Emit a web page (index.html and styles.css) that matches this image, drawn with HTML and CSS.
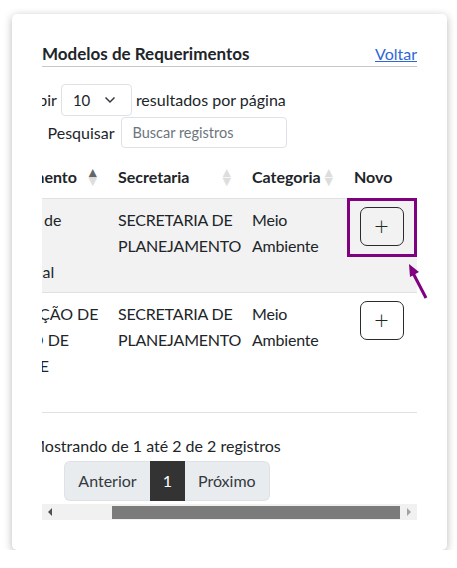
FILE: index.html
```html
<!DOCTYPE html>
<html lang="pt-BR">
<head>
<meta charset="utf-8">
<title>Modelos de Requerimentos</title>
<link rel="stylesheet" href="styles.css">
</head>
<body>
<div class="card">
  <div class="card-head">
    <h2 class="card-title">Modelos de Requerimentos</h2>
    <a class="back-link" href="#">Voltar</a>
  </div>
  <div class="scroller" id="scroller">
    <div class="dt-length">
      <span>Exibir</span>
      <span class="select">10
        <svg class="chevron" width="12" height="8" viewBox="0 0 12 8"><path d="M1.5 1.5l4.5 4.5 4.5-4.5" fill="none" stroke="#343a40" stroke-width="1.5"/></svg>
      </span>
      <span>resultados por página</span>
    </div>
    <div class="dt-filter">
      <span>Pesquisar</span>
      <input class="search" type="text" placeholder="Buscar registros">
    </div>
    <table class="dt-table">
      <colgroup>
        <col class="c1"><col class="c2"><col class="c3"><col class="c4">
      </colgroup>
      <thead>
        <tr>
          <th class="sortable asc">Requerimento</th>
          <th class="sortable">Secretaria</th>
          <th class="sortable">Categoria</th>
          <th>Novo</th>
        </tr>
      </thead>
      <tbody>
        <tr class="odd">
          <td class="name">Dispensa de<br>Outorga<br>Residencial</td>
          <td>SECRETARIA DE PLANEJAMENTO</td>
          <td>Meio Ambiente</td>
          <td class="action"><button class="add-btn" type="button">+</button></td>
        </tr>
        <tr>
          <td class="name">REALIZAÇÃO DE<br>PLANTIO DE<br>SEMENTE<br>NATIVA</td>
          <td>SECRETARIA DE PLANEJAMENTO</td>
          <td>Meio Ambiente</td>
          <td class="action"><button class="add-btn" type="button">+</button></td>
        </tr>
      </tbody>
    </table>
    <div class="dt-info">Mostrando de 1 até 2 de 2 registros</div>
    <ul class="pagination">
      <li class="page first"><a href="#">Anterior</a></li>
      <li class="page active"><a href="#">1</a></li>
      <li class="page last"><a href="#">Próximo</a></li>
    </ul>
  </div>
  <div class="hscrollbar">
    <span class="sb-btn sb-left"></span>
    <div class="sb-track"><div class="sb-thumb"></div></div>
    <span class="sb-btn sb-right"></span>
  </div>
  <div class="highlight"></div>
  <svg class="pointer" width="32" height="42" viewBox="0 0 32 42">
    <line x1="13" y1="15" x2="26" y2="40" stroke="#800080" stroke-width="3"/>
    <polygon points="9,6 19,14 10,19" fill="#800080"/>
  </svg>
</div>
<script src="script.js"></script>
</body>
</html>
```
FILE: styles.css
```css
html, body {
  margin: 0;
  padding: 0;
  background: #ffffff;
}
body {
  font-family: Lato, "Liberation Sans", sans-serif;
  font-size: 16px;
  color: #212529;
}
.card {
  position: relative;
  box-sizing: border-box;
  width: 435px;
  height: 536px;
  margin: 14px 0 0 12px;
  padding: 28px 30px 0 30px;
  background: #fff;
  border-radius: 5px;
  box-shadow: 0 2px 8px rgba(0, 0, 0, 0.28);
}
.card-head {
  display: flex;
  justify-content: space-between;
  align-items: center;
  height: 24px;
  border-bottom: 1px solid #c8c8c8;
}
.card-title {
  margin: 0;
  font-size: 17px;
  font-weight: 700;
  line-height: 24px;
  color: #212529;
}
.back-link {
  color: #2f67d8;
  font-size: 16px;
  line-height: 24px;
  text-decoration: underline;
}
.scroller {
  margin-top: 17px;
  overflow-x: auto;
  overflow-y: hidden;
  scrollbar-width: none;
}
.scroller::-webkit-scrollbar {
  display: none;
}
.dt-length {
  display: flex;
  justify-content: center;
  align-items: center;
  gap: 4px;
  height: 32px;
  padding-right: 8px;
  line-height: 24px;
}
.select {
  box-sizing: border-box;
  display: flex;
  align-items: center;
  justify-content: space-between;
  width: 71px;
  height: 32px;
  padding: 0 15px 0 11px;
  border: 1px solid #dee2e6;
  border-radius: 4px;
  font-size: 15px;
}
.dt-filter {
  display: flex;
  justify-content: center;
  align-items: center;
  gap: 7px;
  height: 31px;
  margin-top: 1px;
  padding-left: 24px;
}
.search {
  box-sizing: border-box;
  width: 166px;
  height: 31px;
  padding: 0 10px;
  border: 1px solid #dee2e6;
  border-radius: 4px;
  font-family: Lato, "Liberation Sans", sans-serif;
  font-size: 14.5px;
  color: #212529;
  background: #fff;
}
.search::placeholder {
  color: #6c757d;
}
.dt-table {
  width: 449px;
  margin-top: 8px;
  table-layout: fixed;
  border-collapse: collapse;
}
.c1 { width: 142px; }
.c2 { width: 134px; }
.c3 { width: 102px; }
.c4 { width: 71px; }
.dt-table th,
.dt-table td {
  padding: 8px 8px 7px 8px;
  line-height: 26px;
  text-align: left;
  vertical-align: top;
  border-bottom: 1px solid #dee2e6;
}
.dt-table td {
  letter-spacing: -0.2px;
}
.dt-table th {
  padding-bottom: 8px;
  font-weight: 700;
  white-space: nowrap;
}
.dt-table td.name {
  white-space: nowrap;
  letter-spacing: 0;
}
.dt-table tr.odd td {
  background: #f2f2f2;
}
.sortable {
  position: relative;
}
.sortable::before,
.sortable::after {
  position: absolute;
  right: 13px;
  font-family: "DejaVu Sans", sans-serif;
  font-size: 11px;
  line-height: 9px;
  color: #000;
  opacity: 0.13;
}
.sortable::before {
  content: "\25B2";
  bottom: 50%;
}
.sortable::after {
  content: "\25BC";
  top: 50%;
}
.sortable.asc::before {
  opacity: 0.6;
}
.action {
  text-align: center !important;
}
.add-btn {
  box-sizing: border-box;
  width: 44px;
  height: 39px;
  padding: 0;
  border: 1px solid #2b2b2b;
  border-radius: 7px;
  background: transparent;
  font-family: "DejaVu Sans", sans-serif;
  font-size: 19px;
  font-weight: 300;
  color: #1d2a22;
  line-height: 1;
}
.dt-info {
  margin-top: 21px;
  line-height: 24px;
  text-align: center;
  white-space: nowrap;
}
.pagination {
  display: flex;
  justify-content: center;
  margin: 3px 0 3px 0;
  padding: 0 0 0 23px;
  list-style: none;
}
.page a {
  display: block;
  padding: 7px 13px;
  line-height: 24px;
  font-size: 16px;
  color: #343a40;
  text-decoration: none;
  background: #e9ecef;
  border-top: 1px solid #dee2e6;
  border-bottom: 1px solid #dee2e6;
}
.page.first a {
  border-left: 1px solid #dee2e6;
  border-radius: 6px 0 0 6px;
}
.page.last a {
  border-right: 1px solid #dee2e6;
  border-radius: 0 6px 6px 0;
}
.page.active a {
  background: #333333;
  color: #ffffff;
  border-color: #333333;
}
.hscrollbar {
  display: flex;
  height: 16px;
  background: #f1f1f1;
}
.sb-btn {
  position: relative;
  width: 15px;
  flex: none;
}
.sb-btn::after {
  content: "";
  position: absolute;
  top: 4px;
  width: 0;
  height: 0;
  border-top: 4px solid transparent;
  border-bottom: 4px solid transparent;
}
.sb-left::after {
  left: 6px;
  border-right: 4px solid #505050;
}
.sb-right::after {
  left: 5px;
  border-left: 4px solid #a3a3a3;
}
.sb-track {
  flex: 1;
  display: flex;
  align-items: flex-start;
  padding-top: 2px;
}
.sb-thumb {
  width: 288px;
  height: 13px;
  margin-left: 55px;
  background: #7b7b7b;
}
.highlight {
  position: absolute;
  left: 335px;
  top: 184px;
  box-sizing: border-box;
  width: 70px;
  height: 59px;
  border: 3px solid #800080;
}
.pointer {
  position: absolute;
  left: 388px;
  top: 244px;
}
```
FILE: script.js
```js
document.getElementById('scroller').scrollLeft = 10000;
```
